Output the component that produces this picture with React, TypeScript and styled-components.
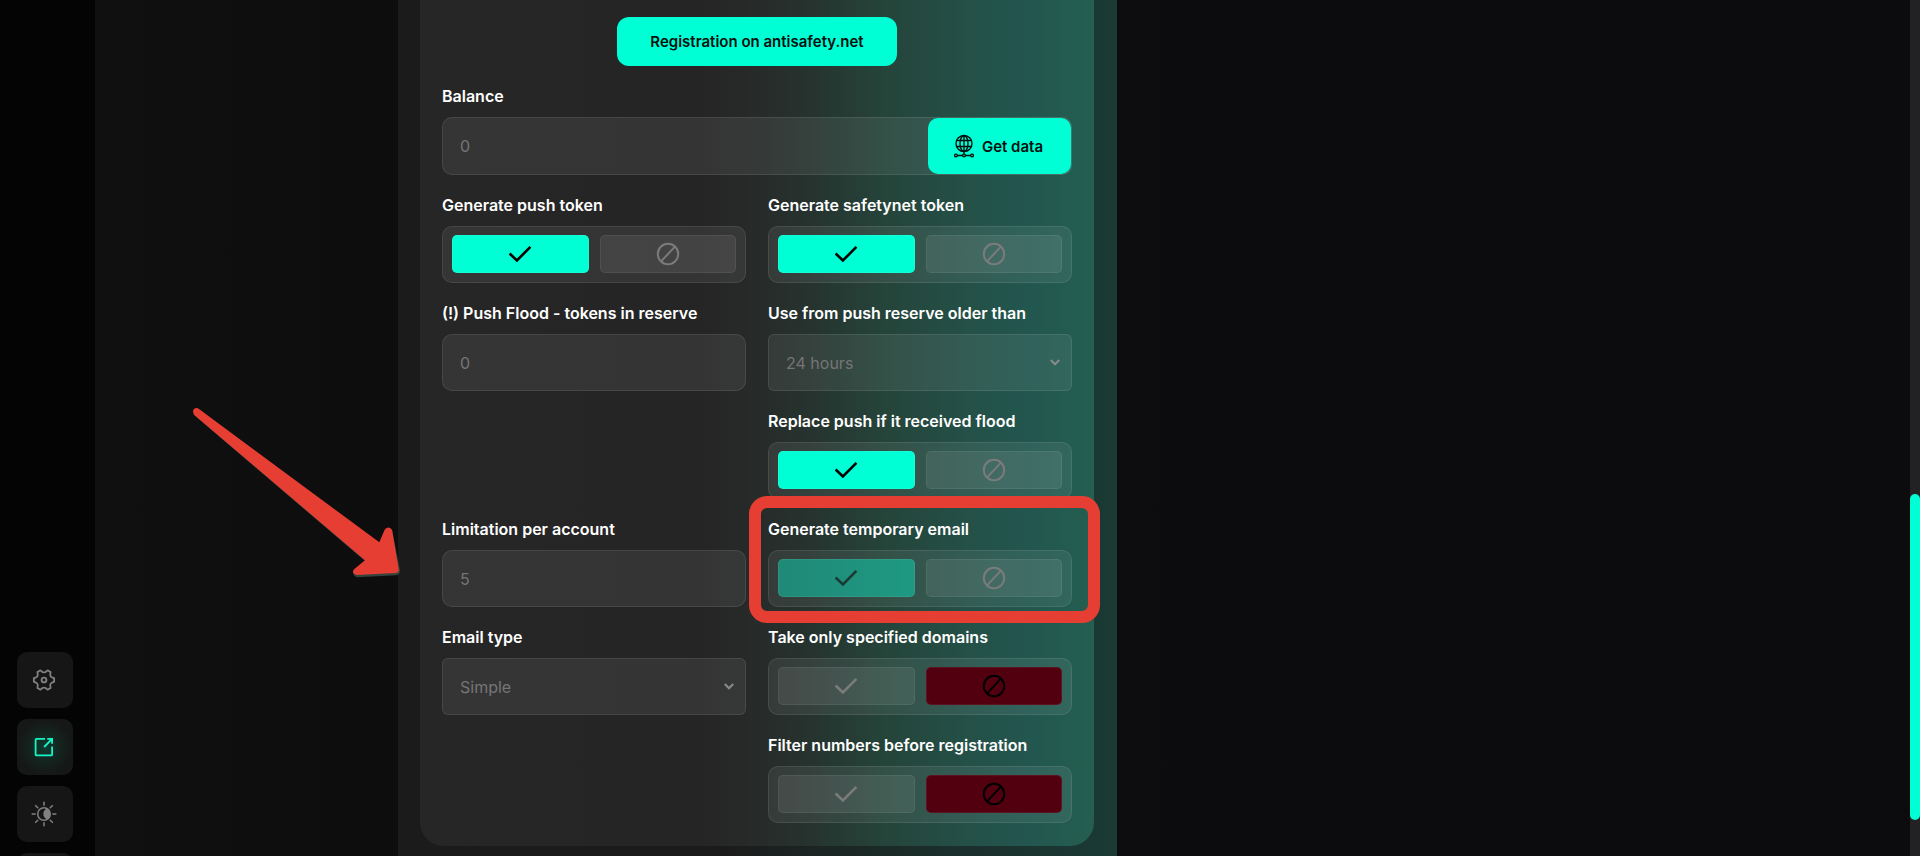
import React, { useId, useState } from 'react';
import styled, { createGlobalStyle, css } from 'styled-components';

const ACCENT = '#00ffd5';
const MARK = '#e63e32';

const GlobalStyle = createGlobalStyle`
  *, *::before, *::after { box-sizing: border-box; }
  body {
    margin: 0;
    background: #0c0c0e;
    color: #fff;
    font-family: Inter, "Liberation Sans", sans-serif;
  }
  button, input, select { font-family: inherit; }
`;

const Shell = styled.div`
  display: grid;
  grid-template-columns: 95px minmax(0, 1fr) 10px;
  height: 100vh;
  overflow: hidden;
`;

const Sidebar = styled.aside`
  display: flex;
  flex-direction: column;
  justify-content: flex-end;
  background: #040404;
`;

const SideNav = styled.nav`
  display: flex;
  flex-direction: column;
  gap: 11px;
  height: 204px;
  padding-left: 17px;
  overflow: hidden;
`;

const SideButton = styled.button<{ $active?: boolean }>`
  display: flex;
  flex: none;
  align-items: center;
  justify-content: center;
  width: 56px;
  height: 56px;
  padding: 0 2px 0 0;
  border: 0;
  border-radius: 10px;
  background: #161616;
  color: #808080;
  cursor: pointer;
  ${({ $active }) =>
    $active &&
    css`
      background: radial-gradient(circle, #0f3b31 0, #14241f 38%, #161818 68%);
      color: #14f5c4;
    `}
`;

const Main = styled.main`
  display: grid;
  grid-template-columns: 303fr 719fr 793fr;
  min-width: 0;
  background: linear-gradient(90deg, #0f100f 0, #0e0d0e 17%, #0c0c0e 60%);
`;

const Panel = styled.section`
  position: relative;
  grid-column: 2;
  padding: 0 23px 10px 22px;
  background: linear-gradient(90deg, #1b1b1b 0, #1c1b1c 45%, #1b2624 60%, #1b3833 96%, #1b3a34 100%);
`;

const Card = styled.form`
  display: flex;
  flex-direction: column;
  gap: 20px;
  padding: 17px 22px 23px;
  border-radius: 0 0 24px 24px;
  background: linear-gradient(
    90deg,
    #262626 0,
    #262526 42%,
    #272928 48%,
    #26332f 58%,
    #25443a 69%,
    #245047 81%,
    #22564f 90%,
    #245f50 100%
  );
`;

const AccentButton = styled.button`
  display: flex;
  align-items: center;
  justify-content: center;
  gap: 8px;
  border: 0;
  border-radius: 12px;
  background: ${ACCENT};
  color: #06100e;
  font-size: 15px;
  font-weight: 600;
  white-space: nowrap;
  cursor: pointer;
`;

const RegisterButton = styled(AccentButton)`
  align-self: center;
  width: 280px;
  height: 49px;
`;

const DataButton = styled(AccentButton)`
  width: 143px;
  padding: 0 8px 0 6px;
  border-radius: 10px;
`;

const Columns = styled.div`
  display: grid;
  grid-template-columns: repeat(2, minmax(0, 1fr));
  gap: 20px 22px;
`;

const FieldBox = styled.div<{ $right?: boolean }>`
  position: relative;
  display: flex;
  flex-direction: column;
  gap: 11px;
  ${({ $right }) => $right && 'grid-column: 2;'}
`;

const labelText = css`
  font-size: 16px;
  font-weight: 600;
  line-height: 20px;
  white-space: nowrap;
`;

const Label = styled.label`
  ${labelText}
`;

const GroupTitle = styled.div`
  ${labelText}
`;

const surface = css`
  border: 1px solid rgba(255, 255, 255, 0.09);
  border-radius: 10px;
  background: rgba(255, 255, 255, 0.07);
`;

const valueText = css`
  color: #757575;
  font-size: 16px;
  font-weight: 400;
`;

const BalanceRow = styled.div`
  ${surface}
  display: flex;
  height: 58px;
`;

const BareInput = styled.input`
  ${valueText}
  flex: 1;
  min-width: 0;
  padding: 0 17px;
  border: 0;
  outline: 0;
  background: transparent;
`;

const TextInput = styled.input`
  ${surface}
  ${valueText}
  width: 100%;
  height: 57px;
  padding: 0 17px;
  outline: 0;
`;

const SelectWrap = styled.div`
  position: relative;
  color: #8b8b8b;
  svg {
    position: absolute;
    top: 24px;
    right: 12px;
    pointer-events: none;
  }
`;

const Select = styled.select`
  ${surface}
  ${valueText}
  width: 100%;
  height: 57px;
  padding: 0 17px;
  border-radius: 6px;
  outline: 0;
  appearance: none;
`;

const ToggleGroup = styled.div`
  ${surface}
  display: grid;
  grid-template-columns: 1fr 1fr;
  gap: 11px;
  height: 57px;
  padding: 8px 9px 9px;
`;

const Choice = styled.label<{ $fill?: string; $dim?: boolean }>`
  position: relative;
  display: flex;
  align-items: center;
  justify-content: center;
  border: 1px solid rgba(255, 255, 255, 0.07);
  border-radius: 5px;
  background: ${({ $fill }) => $fill ?? 'rgba(255, 255, 255, 0.075)'};
  color: ${({ $fill }) => ($fill ? '#000' : '#7b7b7b')};
  cursor: pointer;
  ${({ $dim }) =>
    $dim &&
    css`
      background: rgba(0, 255, 213, 0.4);
      color: #1b3a36;
    `}
  input {
    position: absolute;
    inset: 0;
    width: 100%;
    height: 100%;
    margin: 0;
    opacity: 0;
    cursor: pointer;
  }
`;

const Highlight = styled.div`
  position: absolute;
  inset: -23px -28px -16px -19px;
  border: 12px solid ${MARK};
  border-radius: 18px;
  pointer-events: none;
`;

const Pointer = styled.svg`
  position: absolute;
  top: 390px;
  left: -218px;
  pointer-events: none;
`;

const ScrollTrack = styled.div`
  display: grid;
  grid-template-rows: 494fr 326fr 36fr;
  background: #222224;
`;

const ScrollThumb = styled.div`
  grid-row: 2;
  border-radius: 5px;
  background: ${ACCENT};
`;

const gearPath = (() => {
  const at = (deg: number, r: number) => {
    const a = (deg * Math.PI) / 180;
    return `${(12 + r * Math.cos(a)).toFixed(2)} ${(12 + r * Math.sin(a)).toFixed(2)}`;
  };
  let d = `M${at(-10, 10.3)}`;
  for (let i = 0; i < 6; i += 1) {
    const base = i * 60;
    d += `L${at(base + 10, 10.3)}L${at(base + 19, 8.2)}Q${at(base + 30, 7.2)} ${at(base + 41, 8.2)}L${at(base + 50, 10.3)}`;
  }
  return `${d}Z`;
})();

const GearIcon = () => (
  <svg width="24" height="24" viewBox="0 0 24 24" fill="none" stroke="currentColor" strokeWidth="1.8" strokeLinejoin="round">
    <path d={gearPath} />
    <circle cx="12" cy="12" r="2.4" strokeWidth="1.9" />
  </svg>
);

const ShareIcon = () => (
  <svg width="24" height="24" viewBox="0 0 24 24" fill="none" stroke="currentColor" strokeWidth="1.8">
    <path d="M13 3.9H4.6a1 1 0 0 0-1 1v14.5a1 1 0 0 0 1 1h14.5a1 1 0 0 0 1-1V11.5" />
    <path d="M15.3 3.9h4.8v4.9M12.2 12l7.6-7.8" />
  </svg>
);

const SunIcon = () => (
  <svg width="26" height="26" viewBox="0 0 26 26" fill="none" stroke="currentColor" strokeWidth="1.5" strokeLinecap="round">
    <circle cx="13" cy="13" r="6.3" />
    <path d="M16 7.6a6.2 6.2 0 0 1 0 10.8c-2.100-.900-3.700-2.900-3.700-5.400s1.600-4.500 3.700-5.400z" fill="currentColor" stroke="none" />
    {[0, 45, 90, 135, 180, 225, 270, 315].map((deg) => (
      <path key={deg} d="M13 1.200v3" transform={`rotate(${deg} 13 13)`} />
    ))}
  </svg>
);

const GlobeIcon = () => (
  <svg width="20" height="24" viewBox="0 0 20 24" fill="none" stroke="currentColor" strokeWidth="1.4">
    <circle cx="10" cy="9.5" r="8" />
    <ellipse cx="10" cy="9.5" rx="4" ry="8" />
    <path d="M10 1.500v18.500M2.800 6.500h14.400M2.800 12.500h14.400M3.500 21.500h5M11.500 21.500h5" />
    <circle cx="2" cy="21.5" r="1.4" />
    <circle cx="10" cy="21.5" r="1.4" />
    <circle cx="18" cy="21.5" r="1.4" />
  </svg>
);

const CheckIcon = () => (
  <svg width="24" height="18" viewBox="0 0 24 18" fill="none" stroke="currentColor" strokeWidth="2.6">
    <path d="M1.600 8.500l7.300 7L22.400 1.900" />
  </svg>
);

const BanIcon = () => (
  <svg width="24" height="24" viewBox="0 0 24 24" fill="none" stroke="currentColor" strokeWidth="2">
    <circle cx="12" cy="12" r="10.2" />
    <path d="M5.300 19.100L18.700 4.900" />
  </svg>
);

const ChevronIcon = () => (
  <svg width="10" height="9" viewBox="0 0 10 9" fill="none" stroke="currentColor" strokeWidth="2">
    <path d="M0.800 2l4.200 4.300L9.200 2" />
  </svg>
);

type ToggleProps = {
  title: string;
  initial: boolean;
  right?: boolean;
  dim?: boolean;
  children?: React.ReactNode;
};

const ToggleField = ({ title, initial, right, dim, children }: ToggleProps) => {
  const id = useId();
  const [on, setOn] = useState(initial);
  return (
    <FieldBox $right={right}>
      <GroupTitle id={id}>{title}</GroupTitle>
      <ToggleGroup role="radiogroup" aria-labelledby={id}>
        <Choice $fill={on ? ACCENT : undefined} $dim={dim && on}>
          <input type="radio" name={id} aria-label="On" checked={on} onChange={() => setOn(true)} />
          <CheckIcon />
        </Choice>
        <Choice $fill={on ? undefined : '#520010'}>
          <input type="radio" name={id} aria-label="Off" checked={!on} onChange={() => setOn(false)} />
          <BanIcon />
        </Choice>
      </ToggleGroup>
      {children}
    </FieldBox>
  );
};

const TextField = ({ title, value }: { title: string; value: string }) => {
  const id = useId();
  return (
    <FieldBox>
      <Label htmlFor={id}>{title}</Label>
      <TextInput id={id} defaultValue={value} />
    </FieldBox>
  );
};

const SelectField = ({ title, options }: { title: string; options: string[] }) => {
  const id = useId();
  return (
    <FieldBox>
      <Label htmlFor={id}>{title}</Label>
      <SelectWrap>
        <Select id={id}>
          {options.map((option) => (
            <option key={option}>{option}</option>
          ))}
        </Select>
        <ChevronIcon />
      </SelectWrap>
    </FieldBox>
  );
};

export default function App() {
  return (
    <>
      <GlobalStyle />
      <Shell>
        <Sidebar>
          <SideNav aria-label="Sections">
            <SideButton aria-label="Settings"><GearIcon /></SideButton>
            <SideButton aria-label="Open" $active><ShareIcon /></SideButton>
            <SideButton aria-label="Theme"><SunIcon /></SideButton>
            <SideButton aria-label="More" />
          </SideNav>
        </Sidebar>
        <Main>
          <Panel>
            <Card onSubmit={(event) => event.preventDefault()}>
              <RegisterButton type="button">Registration on antisafety.net</RegisterButton>
              <FieldBox>
                <Label htmlFor="balance">Balance</Label>
                <BalanceRow>
                  <BareInput id="balance" defaultValue="0" />
                  <DataButton type="button">
                    <GlobeIcon />
                    Get data
                  </DataButton>
                </BalanceRow>
              </FieldBox>
              <Columns>
                <ToggleField title="Generate push token" initial />
                <ToggleField title="Generate safetynet token" initial />
                <TextField title="(!) Push Flood - tokens in reserve" value="0" />
                <SelectField title="Use from push reserve older than" options={['24 hours']} />
                <ToggleField title="Replace push if it received flood" initial right />
                <TextField title="Limitation per account" value="5" />
                <ToggleField title="Generate temporary email" initial dim>
                  <Highlight />
                </ToggleField>
                <SelectField title="Email type" options={['Simple']} />
                <ToggleField title="Take only specified domains" initial={false} />
                <ToggleField title="Filter numbers before registration" initial={false} right />
              </Columns>
            </Card>
            <Pointer width="240" height="200" viewBox="0 0 720 600" aria-hidden="true">
              <path
                d="M58 58L598 458L614 420Q625 406 636 420L659 538Q660 550 648 553L530 559Q512 550 523 538L555 511L42 73Q36 58 50 55Z"
                fill="#35443f"
                transform="translate(1 3)"
              />
              <path
                d="M57 57L598 457L614 419Q625 406 636 419L656 536Q658 548 646 549L530 555Q512 549 523 537L555 511L42 74Q34 58 48 54Q53 53 57 57Z"
                fill={MARK}
              />
            </Pointer>
          </Panel>
        </Main>
        <ScrollTrack>
          <ScrollThumb />
        </ScrollTrack>
      </Shell>
    </>
  );
}
